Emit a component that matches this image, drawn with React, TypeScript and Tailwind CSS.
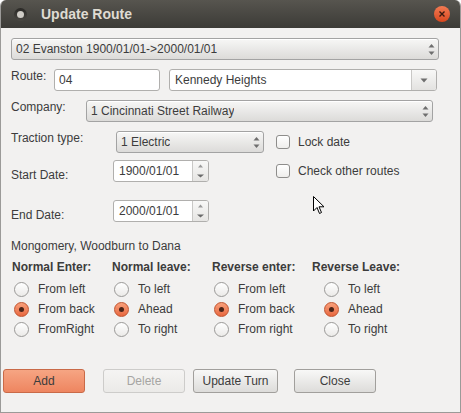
import React from "react";

const UpDown = () => (
  <svg width="7" height="13" viewBox="0 0 7 13">
    <path d="M0.5 4.5 L3.5 1 L6.5 4.5 Z" fill="#6e6e6e" />
    <path d="M0.5 8.5 L3.5 12 L6.5 8.5 Z" fill="#6e6e6e" />
  </svg>
);

const Combo = ({ text, w }: { text: string; w: string }) => (
  <div
    className={`flex h-[22px] ${w} items-center justify-between rounded-[3px] border border-[#a3a3a3] bg-linear-to-b from-[#f7f7f6] to-[#dcdbd9] pr-[3px] pl-[4px] shadow-[inset_0_1px_0_#ffffff]`}
  >
    <span className="truncate">{text}</span>
    <UpDown />
  </div>
);

const Spin = ({ value }: { value: string }) => (
  <div className="flex h-[22px] w-[96px] overflow-hidden rounded-[3px] border border-[#b0afad] bg-white">
    <div className="flex flex-1 items-center pl-[5px]">{value}</div>
    <div className="flex w-[16px] flex-col items-center justify-between border-l border-[#c9c8c6] bg-linear-to-b from-[#f8f8f7] to-[#e6e5e3] py-[3px]">
      <svg width="5" height="4" viewBox="0 0 5 4">
        <path d="M0 3.5 L2.5 0.5 L5 3.5 Z" fill="#9a9a9a" />
      </svg>
      <svg width="7" height="4" viewBox="0 0 7 4">
        <path d="M0 0.5 L3.5 3.5 L7 0.5 Z" fill="#6a6a6a" />
      </svg>
    </div>
  </div>
);

const Check = ({ label }: { label: string }) => (
  <div className="flex h-[14px] items-center gap-[8px]">
    <div className="h-[14px] w-[14px] rounded-[3px] border border-[#8e8d8b] bg-linear-to-b from-[#ffffff] to-[#efeeec]" />
    <span className="leading-[14px]">{label}</span>
  </div>
);

const Radio = ({ label, on }: { label: string; on?: boolean }) => (
  <div className="flex h-[20px] items-center gap-[9px]">
    {on ? (
      <div className="flex h-[15px] w-[15px] items-center justify-center rounded-full border border-[#c0532e] bg-linear-to-b from-[#f8a07b] to-[#e8683f]">
        <div className="h-[5px] w-[5px] rounded-full bg-[#4a2418]" />
      </div>
    ) : (
      <div className="h-[15px] w-[15px] rounded-full border border-[#9a9997] bg-linear-to-b from-[#ffffff] to-[#ebeae8]" />
    )}
    <span>{label}</span>
  </div>
);

const RadioCol = ({
  title,
  items,
  sel,
  indent,
}: {
  title: string;
  items: string[];
  sel: number;
  indent: string;
}) => (
  <div className="flex flex-col">
    <div className="pl-[1px] font-bold leading-[14px]">{title}</div>
    <div className={`mt-[5px] flex flex-col ${indent}`}>
      {items.map((it, i) => (
        <Radio key={it} label={it} on={i === sel} />
      ))}
    </div>
  </div>
);

const Button = ({
  label,
  kind,
  w,
}: {
  label: string;
  kind?: "primary" | "disabled";
  w: string;
}) => {
  const style =
    kind === "primary"
      ? "border-[#c96a48] bg-linear-to-b from-[#f6a583] to-[#ee8560] text-[#3c3c3c]"
      : kind === "disabled"
        ? "border-[#cdccca] bg-linear-to-b from-[#f5f4f3] to-[#ebeae8] text-[#a6a5a3]"
        : "border-[#a19f9c] bg-linear-to-b from-[#f8f8f7] to-[#dddcda] text-[#3c3c3c]";
  return (
    <div
      className={`flex h-[24px] ${w} items-center justify-center rounded-[3px] border ${style}`}
    >
      {label}
    </div>
  );
};

export default function App() {
  return (
    <div className="relative h-[413px] w-[461px] bg-white font-['Liberation_Sans',sans-serif] text-[12px] text-[#3c3c3c]">
      <div className="flex h-full flex-col overflow-hidden rounded-t-[6px] border-x border-b border-[#9b9a98] bg-[#f2f1f0]">
        {/* title bar */}
        <div className="flex h-[28px] items-center bg-linear-to-b from-[#57554f] to-[#3c3b37] pr-[10px] pl-[13px]">
          <div className="flex h-[13px] w-[13px] items-center justify-center rounded-full bg-linear-to-b from-[#2a2926] to-[#4a4843]">
            <div className="h-[7px] w-[7px] rounded-full bg-[#cfccc6]" />
          </div>
          <div className="ml-[14px] text-[14px] font-bold text-[#dfdbd2]">Update Route</div>
          <div className="ml-auto flex h-[16px] w-[16px] items-center justify-center rounded-full bg-linear-to-b from-[#f27a52] to-[#d9461c]">
            <svg width="8" height="8" viewBox="0 0 8 8">
              <path d="M1.5 1.5 L6.5 6.5 M6.5 1.5 L1.5 6.5" stroke="#3a1a10" strokeWidth="1.4" />
            </svg>
          </div>
        </div>

        <div className="flex flex-col pt-[10px] pl-[10px]">
          <Combo text="02 Evanston 1900/01/01->2000/01/01" w="w-[428px]" />

          <div className="mt-[9px] flex items-start">
            <div className="w-[43px] leading-[14px]">Route:</div>
            <div className="flex h-[22px] w-[106px] items-center rounded-[3px] border border-[#b0afad] bg-white pl-[4px]">
              04
            </div>
            <div className="ml-[9px] flex h-[22px] w-[268px] overflow-hidden rounded-[3px] border border-[#b0afad] bg-white">
              <div className="flex flex-1 items-center pl-[5px]">Kennedy Heights</div>
              <div className="flex w-[25px] items-center justify-center border-l border-[#c9c8c6] bg-linear-to-b from-[#f8f8f7] to-[#e3e2e0]">
                <svg width="8" height="5" viewBox="0 0 8 5">
                  <path d="M0.5 0.5 L4 4.5 L7.5 0.5 Z" fill="#6e6e6e" />
                </svg>
              </div>
            </div>
          </div>

          <div className="mt-[9px] flex items-start">
            <div className="w-[75px] leading-[14px]">Company:</div>
            <Combo text="1 Cincinnati Street Railway" w="w-[347px]" />
          </div>

          <div className="mt-[9px] flex">
            <div className="flex w-[265px] flex-col">
              <div className="flex items-start">
                <div className="w-[105px] leading-[14px]">Traction type:</div>
                <Combo text="1 Electric" w="w-[148px]" />
              </div>
              <div className="mt-[7px] flex items-end">
                <div className="w-[102px] leading-[14px]">Start Date:</div>
                <Spin value="1900/01/01" />
              </div>
              <div className="mt-[18px] flex items-end">
                <div className="w-[102px] leading-[14px]">End Date:</div>
                <Spin value="2000/01/01" />
              </div>
            </div>
            <div className="flex flex-col gap-[15px] pt-[4px]">
              <Check label="Lock date" />
              <Check label="Check other routes" />
            </div>
          </div>

          <div className="mt-[17px] leading-[14px]">Mongomery, Woodburn to Dana</div>

          <div className="mt-[7px] grid grid-cols-[100px_100px_100px_100px]">
            <RadioCol
              title="Normal Enter:"
              items={["From left", "From back", "FromRight"]}
              sel={1}
              indent="pl-[3px]"
            />
            <RadioCol
              title="Normal leave:"
              items={["To left", "Ahead", "To right"]}
              sel={1}
              indent="pl-[3px]"
            />
            <RadioCol
              title="Reverse enter:"
              items={["From left", "From back", "From right"]}
              sel={1}
              indent="pl-[3px]"
            />
            <RadioCol
              title="Reverse Leave:"
              items={["To left", "Ahead", "To right"]}
              sel={1}
              indent="pl-[13px]"
            />
          </div>
        </div>

        <div className="mt-[30px] flex pl-[2px]">
          <Button label="Add" kind="primary" w="w-[82px]" />
          <div className="ml-[18px]">
            <Button label="Delete" kind="disabled" w="w-[82px]" />
          </div>
          <div className="ml-[8px]">
            <Button label="Update Turn" w="w-[85px]" />
          </div>
          <div className="ml-[16px]">
            <Button label="Close" w="w-[82px]" />
          </div>
        </div>
      </div>

      {/* mouse pointer */}
      <svg className="absolute top-[196px] left-[313px]" width="12" height="19" viewBox="0 0 12 19">
        <path
          d="M0.5 0.5 L0.5 15 L4 11.5 L6.5 17.5 L8.5 16.5 L6 10.8 L11 10.8 Z"
          fill="#ffffff"
          stroke="#000000"
          strokeWidth="1"
          strokeLinejoin="round"
        />
      </svg>
    </div>
  );
}
